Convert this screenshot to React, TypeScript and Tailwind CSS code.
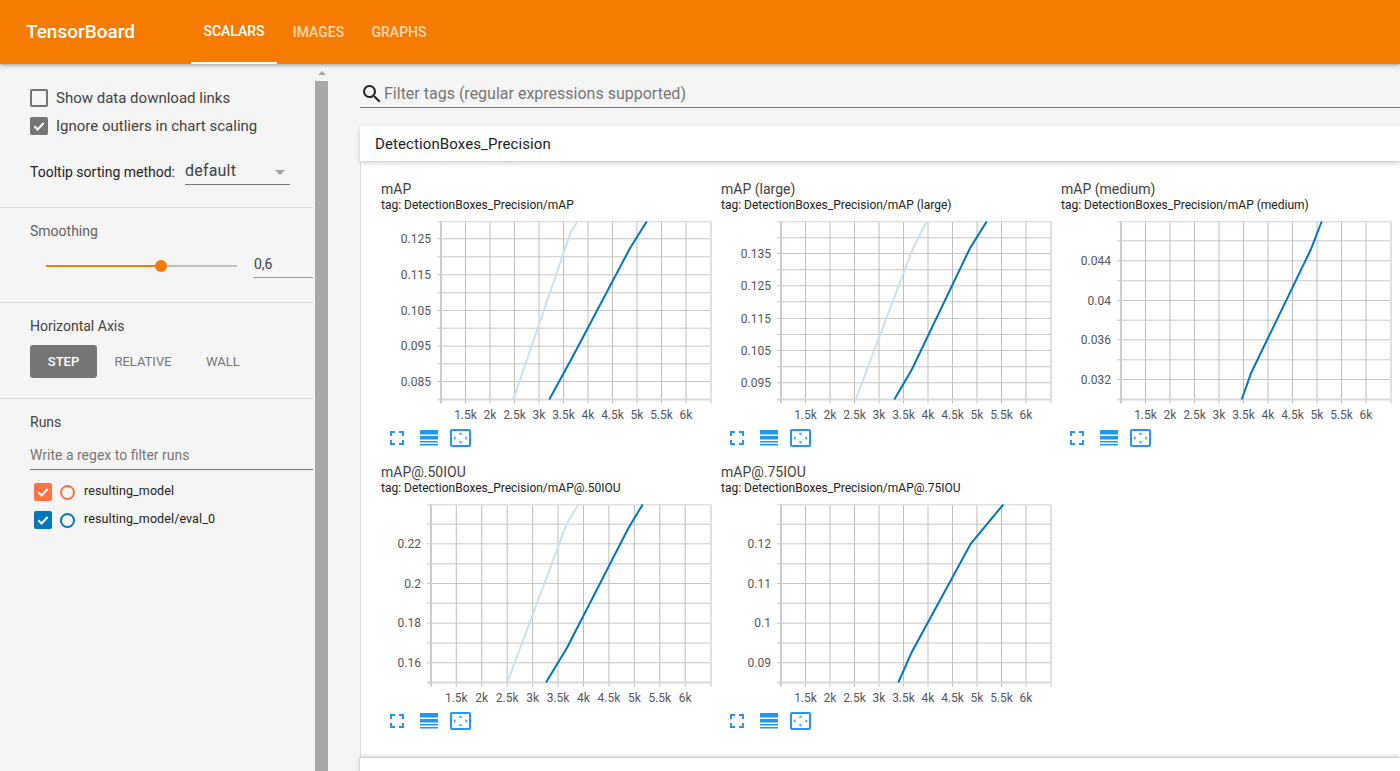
type Point = [number, number];

type ChartSpec = {
  name: string;
  axisX: number;
  firstTick: number;
  tickStep: number;
  yMajor: [string, number][];
  yMinor: number[];
  dark: Point[];
  light?: Point[];
};

const X_LABELS = ['1.5k', '2k', '2.5k', '3k', '3.5k', '4k', '4.5k', '5k', '5.5k', '6k'];
const PLOT_H = 178;
const PLOT_R = 330;

const CHARTS: ChartSpec[] = [
  {
    name: 'mAP',
    axisX: 60,
    firstTick: 84.5,
    tickStep: 24.5,
    yMajor: [['0.125', 17.3], ['0.115', 53.3], ['0.105', 89], ['0.095', 124.7], ['0.085', 160]],
    yMinor: [35.3, 71.3, 106.7, 142.3],
    dark: [[168.3, 178], [190.7, 137], [249, 26.7], [265.7, 0]],
    light: [[132.3, 178], [189.7, 10.7], [196.7, 0]],
  },
  {
    name: 'mAP (large)',
    axisX: 60,
    firstTick: 84.5,
    tickStep: 24.5,
    yMajor: [['0.135', 32], ['0.125', 64.3], ['0.115', 97], ['0.105', 129], ['0.095', 161.3]],
    yMinor: [16.3, 48.3, 80.3, 113, 145.3],
    dark: [[173.3, 178], [190.7, 148.3], [249, 26.7], [265.7, 0]],
    light: [[134.7, 178], [190.7, 30], [205.7, 0]],
  },
  {
    name: 'mAP (medium)',
    axisX: 60,
    firstTick: 84.5,
    tickStep: 24.5,
    yMajor: [['0.044', 39.3], ['0.04', 79], ['0.036', 118.3], ['0.032', 158]],
    yMinor: [19.3, 59.3, 98.7, 138.3],
    dark: [[180.7, 178], [190, 151.7], [249.7, 28.3], [260.7, 0]],
  },
  {
    name: 'mAP@.50IOU',
    axisX: 50,
    firstTick: 75.3,
    tickStep: 25.44,
    yMajor: [['0.22', 39.3], ['0.2', 79], ['0.18', 118.7], ['0.16', 158.3]],
    yMinor: [19.7, 59.3, 98.7, 138.5],
    dark: [[165, 178], [186.3, 142.7], [247.3, 23.7], [261.7, 0]],
    light: [[126.3, 178], [185.7, 19.3], [197.3, 0]],
  },
  {
    name: 'mAP@.75IOU',
    axisX: 60,
    firstTick: 84.5,
    tickStep: 24.5,
    yMajor: [['0.12', 39.3], ['0.11', 79], ['0.1', 118.7], ['0.09', 158.3]],
    yMinor: [19.7, 59.3, 98.7, 138.5],
    dark: [[177.3, 178], [190.7, 147.7], [249.7, 39.3], [282.3, 0]],
  },
];

const pts = (p: Point[]) => p.map(([x, y]) => `${x},${y}`).join(' ');

function Chart({ spec }: { spec: ChartSpec }) {
  const { axisX, firstTick, tickStep, yMajor, yMinor } = spec;
  return (
    <svg width="340" height="207" className="block" style={{ fontFamily: 'Roboto, sans-serif' }}>
      <g transform="translate(0,0.5)">
        {/* horizontal grid */}
        {[...yMajor.map(([, y]) => y), ...yMinor].map((y) => (
          <line key={y} x1={axisX - 4} x2={PLOT_R} y1={y} y2={y} stroke="#c6c6c6" strokeWidth="1" />
        ))}
        {/* vertical grid */}
        {X_LABELS.map((label, i) => {
          const x = firstTick + i * tickStep;
          return (
            <g key={label}>
              <line x1={x} x2={x} y1={0} y2={PLOT_H + 4} stroke="#bdbdbd" strokeWidth="1" />
              <text x={x} y={PLOT_H + 19} textAnchor="middle" fontSize="12" fill="#55555c">{label}</text>
            </g>
          );
        })}
        <line x1={axisX - 4} x2={PLOT_R} y1={0} y2={0} stroke="#e0e0e0" strokeWidth="2" />
        <line x1={axisX - 4} x2={PLOT_R} y1={PLOT_H} y2={PLOT_H} stroke="#d8d8d8" strokeWidth="2" />
        <line x1={axisX} x2={axisX} y1={0} y2={PLOT_H + 4} stroke="#cccccc" strokeWidth="2" />
        <line x1={PLOT_R} x2={PLOT_R} y1={0} y2={PLOT_H + 4} stroke="#e0e0e0" strokeWidth="2" />
        {spec.light && <polyline points={pts(spec.light)} fill="none" stroke="#cbe1ef" strokeWidth="2" />}
        <polyline points={pts(spec.dark)} fill="none" stroke="#0077bb" strokeWidth="2" />
        {yMajor.map(([label, y]) => (
          <text key={label} x={axisX - 10} y={y + 4} textAnchor="end" fontSize="12" fill="#55555c">{label}</text>
        ))}
      </g>
    </svg>
  );
}

function ChartIcons() {
  return (
    <div className="flex items-center h-[20px] ml-[9px]">
      <svg width="14" height="14" viewBox="0 0 14 14" fill="#2196f3">
        <path d="M0 0h5v2H2v3H0zM9 0h5v5h-2V2H9zM0 9h2v3h3v2H0zM12 9h2v5H9v-2h3z" />
      </svg>
      <svg width="18" height="16" viewBox="0 0 18 16" fill="#2196f3" className="ml-[16px]">
        <path d="M0 0h18v4.500H0zM0 6h18v3.500H0zM0 11h18v1.500H0zM0 14h18v1.500H0z" />
      </svg>
      <svg width="21" height="18" viewBox="0 0 21 18" fill="#2196f3" className="ml-[12px]">
        <path fillRule="evenodd" d="M2 0h17a2 2 0 0 1 2 2v14a2 2 0 0 1-2 2H2a2 2 0 0 1-2-2V2a2 2 0 0 1 2-2zm0 2v14h17V2z" />
        <path d="M10.500 3.500l2 2h-4zM10.500 14.500l-2-2h4zM3.500 9l2-2v4zM17.500 9l-2-2v4z" />
      </svg>
    </div>
  );
}

function ChartCard({ spec }: { spec: ChartSpec }) {
  return (
    <div className="w-[340px] h-[283px] shrink-0">
      <div className="h-[42px] pt-[1px]">
        <div className="text-[14px] leading-[18px] text-[#424242]">{spec.name}</div>
        <div className="text-[12px] leading-[14px] text-[#212121] whitespace-nowrap">tag: DetectionBoxes_Precision/{spec.name}</div>
      </div>
      <Chart spec={spec} />
      <ChartIcons />
    </div>
  );
}

function Tick() {
  return (
    <svg width="14" height="14" viewBox="0 0 24 24" fill="none" stroke="#fff" strokeWidth="3.6">
      <path d="M4 12.500l5.500 5.500L20 7" />
    </svg>
  );
}

function Run({ color, label }: { color: string; label: string }) {
  return (
    <div className="flex items-center h-[28px] pl-1">
      <div className="w-[18px] h-[18px] rounded-[2px] flex items-center justify-center" style={{ background: color }}>
        <Tick />
      </div>
      <div className="w-[15px] h-[15px] ml-[8px] rounded-full border-2 bg-transparent" style={{ borderColor: color }} />
      <span className="ml-[9px] text-[12.5px] tracking-[0.1px] text-[#212121] -mt-[1px]">{label}</span>
    </div>
  );
}

function Sidebar() {
  return (
    <aside className="relative w-[330px] shrink-0 h-full overflow-hidden bg-[#f5f5f5]">
      <div className="w-[313px]">
        <section className="h-[144px] pl-[30px] pt-[25px] border-b border-[#dddddd]">
          <div className="flex items-center h-[18px]">
            <div className="w-[18px] h-[18px] rounded-[2px] border-2 border-[#757575]" />
            <span className="ml-2 text-[15px] text-[#424242]">Show data download links</span>
          </div>
          <div className="flex items-center h-[18px] mt-[10px]">
            <div className="w-[18px] h-[18px] rounded-[2px] bg-[#757575] flex items-center justify-center">
              <Tick />
            </div>
            <span className="ml-2 text-[15px] text-[#424242]">Ignore outliers in chart scaling</span>
          </div>
          <div className="flex items-center mt-[24px]">
            <span className="text-[14px] text-[#212121]">Tooltip sorting method:</span>
            <div className="ml-[10px] w-[105px] h-[26px] border-b border-[#757575] flex items-center justify-between">
              <span className="text-[16px] text-[#424242] tracking-[0.2px] pb-[2px]">default</span>
              <span className="mr-[5px] mt-[2px] w-0 h-0 border-x-[5px] border-x-transparent border-t-[5px] border-t-[#9e9e9e]" />
            </div>
          </div>
        </section>
        <section className="h-[95px] pl-[30px] pt-[15px] border-b border-[#dddddd]">
          <div className="text-[14px] leading-[16px] text-[#616161]">Smoothing</div>
          <div className="flex items-center mt-[14px]">
            <div className="relative ml-[16px] w-[191px] h-[2px] bg-[#bdbdbd]">
              <div className="absolute left-0 top-0 h-[2px] w-[115px] bg-[#f57c00]" />
              <div className="absolute left-[109px] -top-[5px] w-[12px] h-[12px] rounded-full bg-[#f57c00]" />
            </div>
            <div className="ml-[16px] pl-px w-[60px] h-[25px] border-b border-[#9e9e9e] text-[14px] text-[#424242] leading-[22px]">0,6</div>
          </div>
        </section>
        <section className="h-[96px] pl-[30px] pt-[15px] border-b border-[#dddddd]">
          <div className="text-[14px] leading-[16px] text-[#424242]">Horizontal Axis</div>
          <div className="flex items-center mt-[11px] text-[13px] font-medium">
            <div className="w-[67px] h-[33px] rounded-[3px] bg-[#757575] text-white flex items-center justify-center">STEP</div>
            <div className="w-[92px] text-center text-[#757575] font-normal">RELATIVE</div>
            <div className="w-[17px]" />
            <div className="w-[33px] text-center text-[#757575] font-normal">WALL</div>
          </div>
        </section>
        <section className="pl-[30px] pt-[15px]">
          <div className="text-[14px] leading-[16px] text-[#424242]">Runs</div>
          <div className="mt-[15px] h-[25px] border-b border-[#757575] text-[14px] leading-[20px] text-[#757575]">Write a regex to filter runs</div>
          <div className="mt-[8px]">
            <Run color="#ff7043" label="resulting_model" />
            <Run color="#0077bb" label="resulting_model/eval_0" />
          </div>
        </section>
      </div>
      {/* scrollbar */}
      <div className="absolute right-0 top-0 bottom-0 w-[15px] mr-[1px] flex flex-col items-center">
        <div className="h-[17px] flex items-center">
          <span className="w-0 h-0 border-x-[4px] border-x-transparent border-b-[4px] border-b-[#a8a8a8]" />
        </div>
        <div className="flex-1 w-[13px] bg-[#a8a8a8]" />
      </div>
    </aside>
  );
}

export default function App() {
  return (
    <div className="h-[771px] w-[1400px] overflow-hidden flex flex-col bg-[#f5f5f5]" style={{ fontFamily: 'Roboto, sans-serif' }}>
      <header className="relative z-10 h-[64px] shrink-0 bg-[#f57c00] flex items-stretch shadow-[0_1px_4px_rgba(0,0,0,0.4)]">
        <div className="w-[191px] pl-[26px] flex items-center text-[19px] font-medium text-white">TensorBoard</div>
        <nav className="flex text-[14px] font-medium">
          <div className="w-[86px] flex items-center justify-center text-white border-b-2 border-white pt-[1px]">SCALARS</div>
          <div className="w-[83px] flex items-center justify-center text-white/70">IMAGES</div>
          <div className="w-[78px] flex items-center justify-center text-white/70">GRAPHS</div>
        </nav>
      </header>
      <div className="flex flex-1 min-h-0">
        <Sidebar />
        <main className="flex-1 min-w-0 pl-[30px] overflow-hidden">
          <div className="h-[44px] border-b border-[#757575] flex items-end pb-[1px]">
            <svg width="24" height="24" viewBox="0 0 24 24" fill="#212121" className="shrink-0">
              <path d="M15.500 14h-.79l-.28-.27A6.471 6.471 0 0 0 16 9.500 6.500 6.500 0 1 0 9.500 16c1.610 0 3.090-.59 4.230-1.570l.27.28v.79l5 4.990L20.490 19l-4.990-5zm-6 0C7.010 14 5 11.990 5 9.500S7.010 5 9.500 5 14 7.010 14 9.500 11.990 14 9.500 14z" />
            </svg>
            <span className="text-[16px] leading-[24px] text-[#757575]">Filter tags (regular expressions supported)</span>
          </div>
          <section className="relative mt-[18px] bg-white shadow-[0_2px_5px_rgba(0,0,0,0.2)]">
            <div className="h-[35px] pl-[15px] flex items-center text-[15px] tracking-[0.1px] text-[#212121] pt-[1px]">DetectionBoxes_Precision</div>
          </section>
          <section className="mt-[1px] h-[596px] pl-[20px] pt-[17px] bg-white border-l border-[#dddddd] overflow-hidden">
            <div className="w-[1020px] flex flex-wrap content-start">
              {CHARTS.map((c) => (
                <ChartCard key={c.name} spec={c} />
              ))}
            </div>
          </section>
          <div className="h-[40px] bg-white shadow-[0_-1px_4px_rgba(0,0,0,0.3)]" />
        </main>
      </div>
    </div>
  );
}
